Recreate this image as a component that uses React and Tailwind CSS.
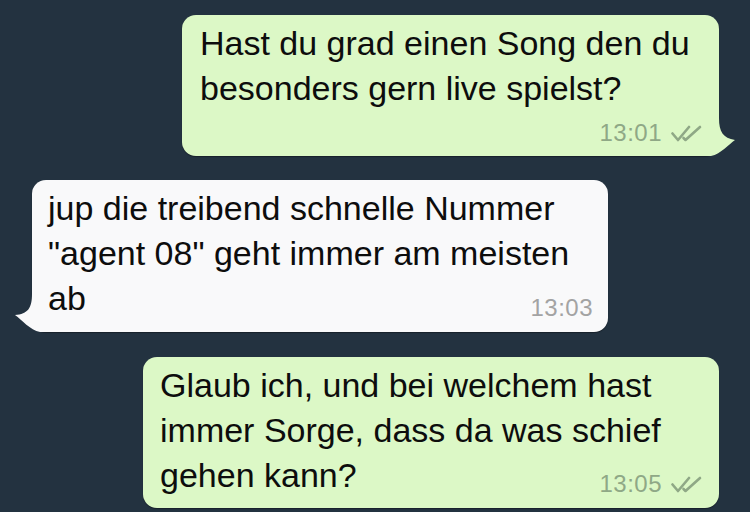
import React from 'react'

function Ticks() {
    return (
        <svg width="31" height="18" viewBox="0 0 31 18" fill="none" stroke="#8fa886" strokeWidth="2.6" strokeLinecap="round" strokeLinejoin="round">
            <path d="M1.5 9.5 L7 16 L18 3" />
            <path d="M12.5 14 L14.5 16 L29 3" />
        </svg>
    )
}

function TailRight({ color }) {
    return (
        <svg className="absolute right-[-18px] bottom-0" width="34" height="40" viewBox="-16 -40 34 40">
            <path d="M-16 -38 L0 -38 C0 -24 4 -18 16 -16 C10 -12 2 -2 -8 0 L-16 0 Z" fill={color} />
        </svg>
    )
}

function TailLeft({ color }) {
    return (
        <svg className="absolute left-[-18px] bottom-0" width="34" height="40" viewBox="-18 -40 34 40">
            <path d="M16 -38 L0 -38 C0 -24 -4 -18 -17 -17 C-10 -12 -2 -2 8 0 L16 0 Z" fill={color} />
        </svg>
    )
}

export default function App() {
    return (
        <div className="w-[750px] h-[512px] overflow-hidden bg-[#233240] pt-[15px] flex flex-col font-['Liberation_Sans',Arial,sans-serif] text-[#0d0d0d]">
            {/* outgoing 1 */}
            <div className="relative self-end mr-[31px] w-[537px] rounded-[14px] bg-[#dcf8c6] pl-[18px] pr-[17px] pt-[6px] pb-[11px] shadow-[0_1px_1px_rgba(0,0,0,0.35)]">
                <div className="text-[34px] leading-[45px]">
                    <div>Hast du grad einen Song den du</div>
                    <div>besonders gern live spielst?</div>
                </div>
                <div className="mt-[10px] flex items-center justify-end gap-[9px] h-[24px]">
                    <span className="text-[24px] leading-[24px] tracking-[0.5px] text-[#8fa886]">13:01</span>
                    <Ticks />
                </div>
                <TailRight color="#dcf8c6" />
            </div>

            {/* incoming */}
            <div className="relative ml-[32px] mt-[24px] w-[576px] rounded-[14px] bg-[#f9f9fa] pl-[16px] pr-[15px] pt-[6px] pb-[11px] shadow-[0_1px_1px_rgba(0,0,0,0.35)]">
                <div className="text-[34px] leading-[45px]">
                    <div>jup die treibend schnelle Nummer</div>
                    <div>"agent 08" geht immer am meisten</div>
                    <div className="flex items-end justify-between">
                        <span>ab</span>
                        <span className="text-[24px] leading-[24px] tracking-[0.5px] text-[#a3a3a3] mb-[1px]">13:03</span>
                    </div>
                </div>
                <TailLeft color="#f9f9fa" />
            </div>

            {/* outgoing 2 */}
            <div className="relative self-end mr-[31px] mt-[25px] w-[576px] rounded-[14px] bg-[#dcf8c6] pl-[17px] pr-[17px] pt-[6px] pb-[10px] shadow-[0_1px_1px_rgba(0,0,0,0.35)]">
                <div className="text-[34px] leading-[45px]">
                    <div>Glaub ich, und bei welchem hast</div>
                    <div>immer Sorge, dass da was schief</div>
                    <div className="flex items-end justify-between">
                        <span>gehen kann?</span>
                        <span className="flex items-center gap-[9px] mb-[2px]">
                            <span className="text-[24px] leading-[24px] tracking-[0.5px] text-[#8fa886]">13:05</span>
                            <Ticks />
                        </span>
                    </div>
                </div>
            </div>
        </div>
    )
}
